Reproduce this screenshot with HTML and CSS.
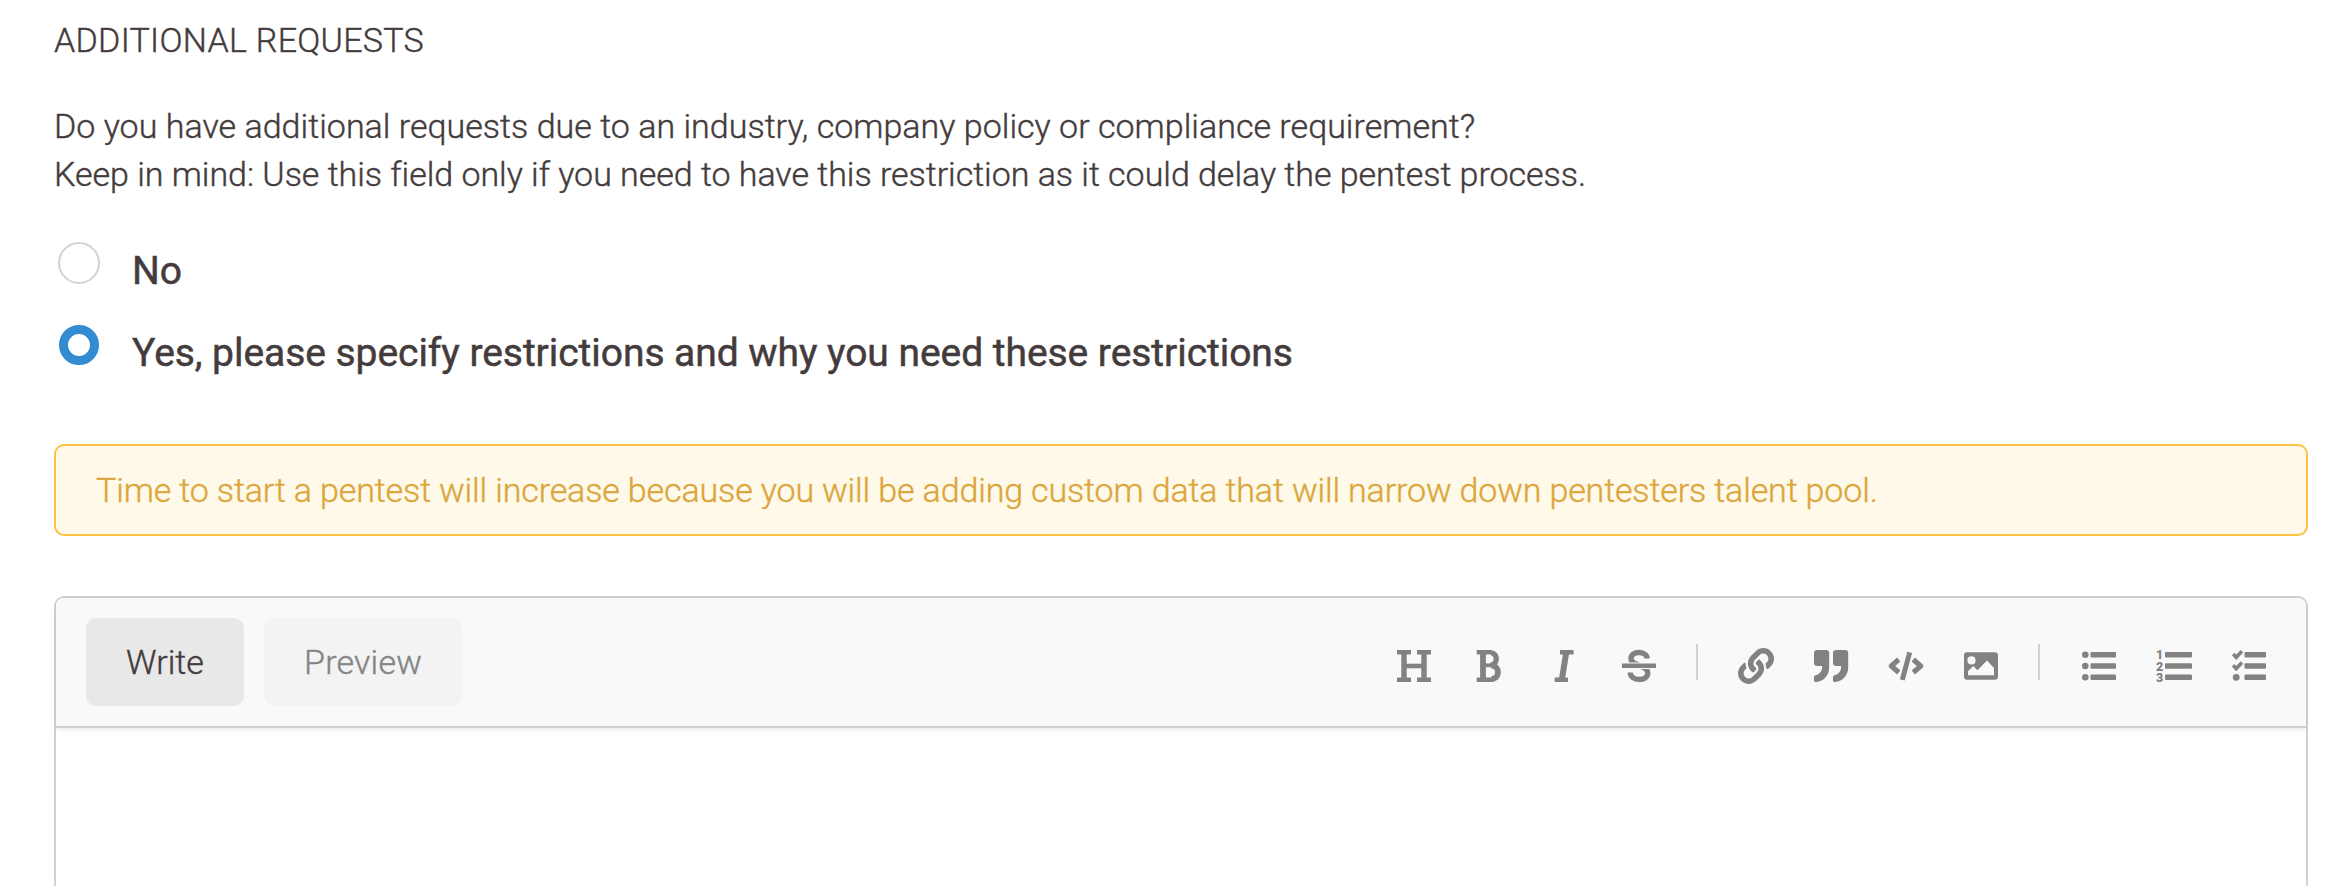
FILE: index.html
```html
<!DOCTYPE html>
<html lang="en">
<head>
<meta charset="utf-8">
<title>Additional requests</title>
<link rel="stylesheet" href="styles.css">
</head>
<body>
<main class="form">
  <h2 class="heading">ADDITIONAL REQUESTS</h2>
  <p class="question"><span class="line-one">Do you have additional requests due to an industry, company policy or compliance requirement?</span><br><span class="line-two">Keep in mind: Use this field only if you need to have this restriction as it could delay the pentest process.</span></p>
  <div class="options">
    <div class="option"><span class="radio"></span><span class="option-label">No</span></div>
    <div class="option"><span class="radio radio-checked"></span><span class="option-label">Yes, please specify restrictions and why you need these restrictions</span></div>
  </div>
  <div class="alert">Time to start a pentest will increase because you will be adding custom data that will narrow down pentesters talent pool.</div>
  <section class="editor">
    <div class="toolbar">
      <div class="tabs">
        <span class="tab tab-active">Write</span>
        <span class="tab">Preview</span>
      </div>
      <div class="tools">
        <div class="tool-group">
          <svg class="icon" viewBox="0 0 36 36"><g fill="none" stroke="currentColor"><path stroke-width="5.4" d="M8 4v28M28 4v28"/><path stroke-width="4.6" d="M8 18h20"/><path stroke-width="4.6" d="M1 4.300h14M21 4.300h14M1 31.700h14M21 31.700h14"/></g></svg>
          <svg class="icon" viewBox="0 0 36 36"><g fill="none" stroke="currentColor"><path stroke-width="5.8" d="M12 4v28"/><path stroke-width="4.6" d="M5.7 4.300H20.500M5.7 31.700H21.500"/><path stroke-width="5.4" d="M20 4.900c7 0 7.200 12.100-.5 12.100"/><path stroke-width="5.8" d="M20.500 17.600c8.600 0 8.600 13.400 0 13.400"/><path stroke-width="3.8" d="M11 17.300h10"/></g></svg>
          <svg class="icon" viewBox="0 0 36 36"><g fill="none" stroke="currentColor"><path stroke-width="4.6" d="M14 4.300h13.600M8.700 31.700h13.300"/><path stroke-width="6" d="M20.300 4l-4.500 28"/></g></svg>
          <svg class="icon" viewBox="0 0 36 36"><g fill="none" stroke="currentColor"><path stroke-width="5.4" d="M26.200 10.500C25.500 2.500 10 2.400 10 10.400c0 3.800 3.600 5.200 8 6.600"/><path stroke-width="5.4" d="M9.300 24.500c0 9 17.500 9.300 17.500.500 0-3.500-2.600-5-7.300-6.700"/><path stroke="#f9f9f9" stroke-width="6.6" d="M1 17.800h34"/><path stroke-width="4.6" d="M1 17.800h34"/></g></svg>
        </div>
        <span class="divider"></span>
        <div class="tool-group">
          <svg class="icon" viewBox="0 0 512 512"><path fill="currentColor" d="M326.612 185.391c59.747 59.809 58.927 155.698.360 214.590-.110.120-.240.250-.360.370l-67.200 67.200c-59.270 59.270-155.699 59.262-214.960 0-59.270-59.260-59.270-155.700 0-214.960l37.106-37.106c9.840-9.840 26.786-3.300 27.294 10.606.648 17.722 3.826 35.527 9.690 52.721 1.986 5.822.567 12.262-3.783 16.612l-13.087 13.087c-28.026 28.026-28.905 73.660-1.155 101.960 28.024 28.579 74.086 28.749 102.325.510l67.200-67.190c28.191-28.191 28.073-73.757 0-101.830-3.701-3.694-7.429-6.564-10.341-8.569a16.037 16.037 0 0 1-6.947-12.606c-.396-10.567 3.348-21.456 11.698-29.806l21.054-21.055c5.521-5.521 14.182-6.199 20.584-1.731a152.482 152.482 0 0 1 20.522 17.197zM467.547 44.449c-59.261-59.262-155.690-59.270-214.960 0l-67.200 67.200c-.120.120-.250.250-.360.370-58.566 58.892-59.387 154.781.360 214.590a152.454 152.454 0 0 0 20.521 17.196c6.402 4.468 15.064 3.789 20.584-1.731l21.054-21.055c8.350-8.350 12.094-19.239 11.698-29.806a16.037 16.037 0 0 0-6.947-12.606c-2.912-2.005-6.640-4.875-10.341-8.569-28.073-28.073-28.191-73.639 0-101.830l67.200-67.190c28.239-28.239 74.300-28.069 102.325.510 27.750 28.300 26.872 73.934-1.155 101.960l-13.087 13.087c-4.350 4.350-5.769 10.790-3.783 16.612 5.864 17.194 9.042 34.999 9.690 52.721.509 13.906 17.454 20.446 27.294 10.606l37.106-37.106c59.271-59.259 59.271-155.699.001-214.959z"/></svg>
          <svg class="icon" viewBox="0 0 36 36"><g fill="currentColor"><path d="M4.200 2H13a3.200 3.200 0 0 1 3.200 3.200V19C16.200 27 11 33.500 3 34c-1.200 0-2-.600-2-1.600v-3.300c0-1 .600-1.500 1.600-1.800C7.200 26 9.200 23 9.200 18H4.200A3.200 3.200 0 0 1 1 14.800V5.200A3.200 3.200 0 0 1 4.200 2z"/><path transform="translate(19)" d="M4.200 2H13a3.200 3.200 0 0 1 3.200 3.200V19C16.200 27 11 33.500 3 34c-1.200 0-2-.600-2-1.600v-3.300c0-1 .600-1.500 1.600-1.800C7.200 26 9.200 23 9.200 18H4.200A3.200 3.200 0 0 1 1 14.800V5.200A3.200 3.200 0 0 1 4.200 2z"/></g></svg>
          <svg class="icon" viewBox="0 0 36 36"><g fill="none" stroke="currentColor" stroke-width="5" stroke-linejoin="round"><path d="M10.700 11.500L3.300 18l7.400 6.500M25.300 11.500l7.400 6.500-7.400 6.500"/><path d="M21.700 4.300l-7.400 27.500"/></g></svg>
          <svg class="icon" viewBox="0 0 36 36"><path fill="currentColor" fill-rule="evenodd" d="M4.200 4.200h27.600A3.200 3.200 0 0 1 35 7.400v21.200a3.200 3.200 0 0 1-3.200 3.200H4.200A3.200 3.200 0 0 1 1 28.600V7.400a3.200 3.200 0 0 1 3.200-3.200zM8.500 8.300a4.100 4.100 0 1 0 0 8.200 4.100 4.100 0 0 0 0-8.200zM5 27.300h26v-7.300l-7-7.500-9.500 9.800-4.200-4.200L5 23.300z"/></svg>
        </div>
        <span class="divider divider-lists"></span>
        <div class="tool-group">
          <svg class="icon" viewBox="0 0 36 36"><g fill="currentColor"><circle cx="4.300" cy="6.700" r="3.300"/><circle cx="4.300" cy="18" r="3.300"/><circle cx="4.300" cy="29.300" r="3.300"/><rect x="9.500" y="4" width="25.500" height="5.600" rx="1"/><rect x="9.500" y="15.200" width="25.500" height="5.600" rx="1"/><rect x="9.500" y="26.400" width="25.500" height="5.600" rx="1"/></g></svg>
          <svg class="icon" viewBox="0 0 36 36"><g fill="currentColor"><text class="digit" x="0" y="11.200">1</text><text class="digit" x="0" y="22.500">2</text><text class="digit" x="0" y="33.600">3</text><rect x="9" y="4" width="27" height="5.600" rx="1"/><rect x="9" y="15.200" width="27" height="5.600" rx="1"/><rect x="9" y="26.400" width="27" height="5.600" rx="1"/></g></svg>
          <svg class="icon" viewBox="0 0 36 36"><g fill="currentColor"><circle cx="5.200" cy="29.300" r="3.400"/><rect x="13.500" y="4" width="21.500" height="5.600" rx="1"/><rect x="13.500" y="15.200" width="21.500" height="5.600" rx="1"/><rect x="13.500" y="26.400" width="21.500" height="5.600" rx="1"/></g><path fill="none" stroke="currentColor" stroke-width="3.600" d="M2.200 6l3 3.300 5.800-6M2.200 17.300l3 3.300 5.800-6"/></svg>
        </div>
      </div>
    </div>
    <div class="content"></div>
  </section>
</main>
</body>
</html>
```
FILE: styles.css
```css
* { box-sizing: border-box; }

body {
  margin: 0;
  height: 886px;
  overflow: hidden;
  background: #fff;
  color: #433b3c;
  font-family: Roboto, "Liberation Sans", sans-serif;
  font-size: 34px;
  font-weight: 300;
  -webkit-text-stroke: 0.4px;
}

.form {
  display: flex;
  flex-direction: column;
  height: 886px;
  padding: 16px 42px 0 54px;
}

.heading {
  margin: 0;
  font-size: 34px;
  font-weight: 300;
  line-height: 48px;
  letter-spacing: 0.28px;
}

.question {
  margin: 38px 0 0;
  line-height: 48px;
  white-space: nowrap;
}

.line-one { letter-spacing: 0.02px; }
.line-two { letter-spacing: -0.03px; }

.options {
  display: flex;
  flex-direction: column;
  gap: 40px;
  margin-top: 44px;
  padding-left: 4px;
}

.option {
  display: flex;
  height: 42px;
  gap: 32px;
}

.radio {
  width: 42px;
  height: 42px;
  border: 2px solid #d3d3d3;
  border-radius: 50%;
}

.radio-checked {
  width: 40px;
  height: 40px;
  margin: 1px;
  border: 9.5px solid #338cd2;
}

.option-label {
  height: 56px;
  margin-top: 1px;
  font-size: 39px;
  font-weight: 400;
  line-height: 56px;
  letter-spacing: -0.05px;
  -webkit-text-stroke: 0.5px;
}

.alert {
  height: 92px;
  margin-top: 78px;
  padding-left: 40px;
  border: 2px solid #ffc143;
  border-radius: 10px;
  background: #fff9e9;
  color: #dba63b;
  line-height: 88px;
  letter-spacing: -0.14px;
}

.editor {
  display: flex;
  flex: 1;
  flex-direction: column;
  margin-top: 60px;
  border: 2px solid #d1d1d1;
  border-bottom: 0;
  border-radius: 10px 10px 0 0;
}

.toolbar {
  display: flex;
  justify-content: space-between;
  height: 130px;
  padding: 20px 39px 0 30px;
  border-bottom: 2px solid #d1d1d1;
  border-radius: 8px 8px 0 0;
  background: #f9f9f9;
  box-shadow: 0 2px 4px rgba(0, 0, 0, 0.08);
}

.tabs {
  display: flex;
  gap: 20px;
}

.tab {
  height: 88px;
  padding: 0 40px;
  border-radius: 10px;
  background: #f3f3f3;
  color: #858585;
  line-height: 88px;
  letter-spacing: 0.2px;
}

.tab-active {
  background: #e8e8e8;
  color: #433b3c;
  letter-spacing: 0.05px;
}

.tools {
  display: flex;
  align-items: flex-start;
  gap: 40px;
  padding-top: 26px;
  color: #828282;
}

.tool-group {
  display: flex;
  gap: 39px;
  padding-top: 4px;
}

.icon {
  display: block;
  width: 36px;
  height: 36px;
}

.digit { font: 900 12.5px Roboto, sans-serif; }

.divider {
  width: 2px;
  height: 36px;
  margin-left: -1px;
  background: #d1d1d1;
}

.divider-lists { margin-right: 1px; }

.content { flex: 1; }
```
